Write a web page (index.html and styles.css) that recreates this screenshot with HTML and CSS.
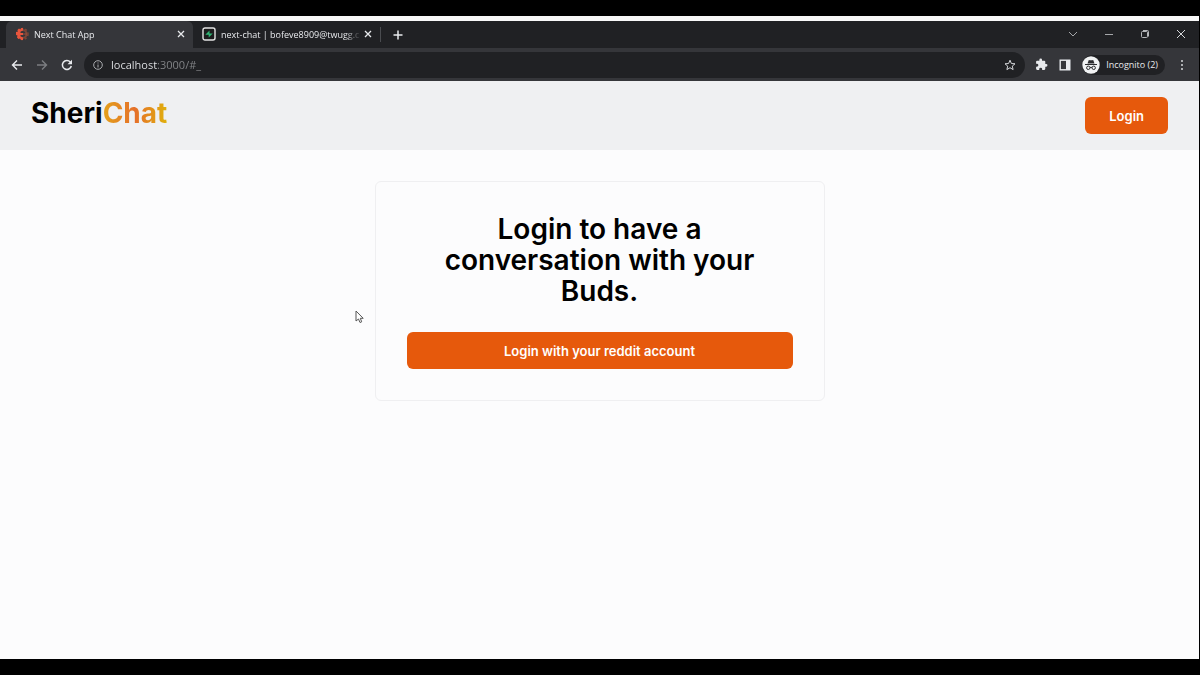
FILE: index.html
```html
<!DOCTYPE html>
<html lang="en">

<head>
    <meta charset="UTF-8">
    <meta name="viewport" content="width=device-width, initial-scale=1.0">
    <link rel="stylesheet" href="styles.css">
    <title>Next Chat App</title>
</head>

<body>
    <div class="window">
        <!-- tab strip -->
        <div class="tabs">
            <div class="tab tab-active">
                <svg class="icon" width="14" height="14" viewBox="0 0 14 14">
                    <circle cx="7.500" cy="7" r="4" fill="none" stroke="#7d4638" stroke-width="2" />
                    <circle cx="7.500" cy="7" r="5.500" fill="none" stroke="#7d4638" stroke-width="1.500" stroke-dasharray="2 2" />
                    <path d="M8 1H6L5.500 2.500L4 1.500L2.500 3L3 4.500L1 5V8L2.500 8.500L2 10.500L3.500 12L5 11.500L6 13H8V10.500L5.500 9.500V8H8V6H5.500V4.500L8 3.500Z" fill="#e8553d" />
                    <path d="M8 7H12" stroke="#a04c3a" />
                </svg>
                <button class="tab-title">Next Chat App</button>
                <button class="tab-close" aria-label="Close tab">
                    <svg width="8" height="8" viewBox="0 0 8 8"><path d="M1 1L7 7M7 1L1 7" stroke="#e8eaed" stroke-width="1.300" /></svg>
                </button>
            </div>
            <div class="tab">
                <svg class="icon" width="14" height="14" viewBox="0 0 14 14">
                    <rect x="1" y="1" width="12" height="12" rx="2" fill="#1c1c1c" stroke="#e4e4e4" stroke-width="1.400" />
                    <path d="M7.500 3.500V6.500H10.700L6.700 10.500V7.800H3.300Z" fill="#2fb574" />
                </svg>
                <button class="tab-title">next-chat | bofeve8909@twugg.c</button>
                <button class="tab-close" aria-label="Close tab">
                    <svg width="8" height="8" viewBox="0 0 8 8"><path d="M1 1L7 7M7 1L1 7" stroke="#e8eaed" stroke-width="1.300" /></svg>
                </button>
            </div>
            <button class="tab-new" aria-label="New tab">
                <svg width="10" height="10" viewBox="0 0 10 10"><path d="M5 0.500V9.500M0.500 5H9.500" stroke="#e8eaed" stroke-width="1.500" /></svg>
            </button>
            <div class="controls">
                <button aria-label="Search tabs">
                    <svg width="10" height="10" viewBox="0 0 10 10"><path d="M1 3L5 7L9 3" fill="none" stroke="#a5a7aa" /></svg>
                </button>
                <button aria-label="Minimize">
                    <svg width="10" height="10" viewBox="0 0 10 10"><path d="M1 5.500H9" stroke="#a5a7aa" /></svg>
                </button>
                <button aria-label="Restore">
                    <svg width="10" height="10" viewBox="0 0 10 10" fill="none" stroke="#b5b7ba">
                        <rect x="1.500" y="2.500" width="6" height="6" rx="1" />
                        <path d="M3 1.500H7.500Q8.500 1.500 8.500 2.500V7.500" />
                    </svg>
                </button>
                <button aria-label="Close">
                    <svg width="10" height="10" viewBox="0 0 10 10"><path d="M1 1L9 9M9 1L1 9" stroke="#d5d7da" /></svg>
                </button>
            </div>
        </div>

        <!-- toolbar -->
        <div class="toolbar">
            <button aria-label="Back">
                <svg width="12" height="12" viewBox="0 0 12 12"><path d="M11 6H2M6 1.500L1.500 6L6 10.500" fill="none" stroke="#e8eaed" stroke-width="1.400" /></svg>
            </button>
            <button aria-label="Forward">
                <svg width="12" height="12" viewBox="0 0 12 12"><path d="M1 6H10M6 1.500L10.500 6L6 10.500" fill="none" stroke="#7c7e81" stroke-width="1.400" /></svg>
            </button>
            <button aria-label="Reload">
                <svg width="12" height="12" viewBox="0 0 12 12">
                    <path d="M10.300 7A4.500 4.500 0 1 1 9.300 3" fill="none" stroke="#e8eaed" stroke-width="1.500" />
                    <path d="M11 0.800V5.300H6.500Z" fill="#e8eaed" />
                </svg>
            </button>
            <div class="address">
                <svg class="icon" width="10" height="10" viewBox="0 0 10 10">
                    <circle cx="5" cy="5" r="4.300" fill="none" stroke="#a9abae" />
                    <path d="M5 4.500V7.500M5 2.500V3.500" stroke="#a9abae" />
                </svg>
                <input class="address-input" type="text" aria-label="Address" value="localhost:3000/#_">
                <button aria-label="Bookmark">
                    <svg width="12" height="12" viewBox="0 0 12 12"><path d="M6 1.200L7.400 4.500L11 4.800L8.300 7.100L9.100 10.600L6 8.700L2.900 10.600L3.700 7.100L1 4.800L4.600 4.500Z" fill="none" stroke="#d5d7da" /></svg>
                </button>
            </div>
            <div class="actions">
                <button aria-label="Extensions">
                    <svg width="13" height="13" viewBox="0 0 24 24"><path fill="#e8eaed" d="M20.500 11H19V7a2 2 0 0 0-2-2h-4V3.500a2.500 2.500 0 0 0-5 0V5H4a2 2 0 0 0-2 2v3.800h1.500a2.700 2.700 0 0 1 0 5.400H2V20a2 2 0 0 0 2 2h3.800v-1.500a2.700 2.700 0 0 1 5.400 0V22H17a2 2 0 0 0 2-2v-4h1.500a2.500 2.500 0 0 0 0-5z" /></svg>
                </button>
                <button aria-label="Side panel">
                    <svg width="12" height="12" viewBox="0 0 12 12">
                        <rect x="1.200" y="1.200" width="9.600" height="9.600" fill="none" stroke="#e8eaed" stroke-width="1.400" />
                        <rect x="7" y="1" width="4" height="10" fill="#e8eaed" />
                    </svg>
                </button>
                <button class="profile">
                    <svg width="18" height="18" viewBox="0 0 18 18">
                        <circle cx="9" cy="9" r="8.700" fill="#f1f3f4" />
                        <path d="M5.500 7.500L6.800 4Q9 4.600 11.200 4L12.500 7.500Z" fill="#2b2c2f" />
                        <path d="M3 8.500H15" stroke="#2b2c2f" />
                        <g fill="none" stroke="#2b2c2f">
                            <circle cx="6.300" cy="11.800" r="1.700" />
                            <circle cx="11.700" cy="11.800" r="1.700" />
                            <path d="M8 11.500Q9 11 10 11.500" />
                        </g>
                    </svg>
                    Incognito (2)
                </button>
                <button aria-label="Menu">
                    <svg width="12" height="12" viewBox="0 0 12 12" fill="#d5d7da">
                        <circle cx="6" cy="2" r="1" />
                        <circle cx="6" cy="6" r="1" />
                        <circle cx="6" cy="10" r="1" />
                    </svg>
                </button>
            </div>
        </div>

        <div class="page">
            <header class="header">
                <h1 class="logo">Sheri<span class="logo-color">Chat</span></h1>
                <button class="btn">Login</button>
            </header>
            <main class="card">
                <h2 class="card-title">Login to have a conversation with your Buds.</h2>
                <button class="btn">Login with your reddit account</button>
            </main>
        </div>
    </div>

    <svg class="cursor" width="10" height="14" viewBox="0 0 10 14">
        <path d="M1 1V11L3.500 9L5 12.500L6.700 11.800L5.300 8.300H8.200Z" fill="#fff" stroke="#555" />
    </svg>
</body>

</html>
```
FILE: styles.css
```css
* {
    box-sizing: border-box;
}

body {
    margin: 0;
    background-color: #000;
    font-family: "Inter", sans-serif;
}

button {
    border: 0;
    padding: 0;
    background: none;
    font-family: inherit;
    cursor: pointer;
}

svg {
    display: block;
}

.icon {
    flex: none;
}

.window {
    display: flex;
    flex-direction: column;
    height: 100vh;
    padding: 16px 1px 16px 0;
    font-family: "Open Sans", sans-serif;
}

/* browser tabs */
.tabs {
    display: flex;
    align-items: stretch;
    height: 32px;
    border-top: 5px solid #f8f8f8;
    padding-left: 6px;
    background-color: #202124;
}

.tab {
    display: flex;
    align-items: center;
    width: 187px;
    padding: 0 7px 1px 9px;
    border-radius: 6px 6px 0 0;
}

.tab-active {
    background-color: #35363a;
}

.tab-title {
    flex: 1;
    overflow: hidden;
    margin: 0 2px 0 5px;
    color: #e8eaed;
    font-size: 9px;
    font-weight: 500;
    text-align: left;
    white-space: nowrap;
    -webkit-mask-image: linear-gradient(to right, #000 88%, transparent);
    mask-image: linear-gradient(to right, #000 88%, transparent);
}

.tab-close {
    padding: 1px;
}

.tab-new {
    margin: 6px 0;
    padding: 0 12px;
    border-left: 1px solid #4a4c50;
}

.controls {
    display: flex;
    align-items: center;
    gap: 26px;
    margin-left: auto;
    padding: 0 13px 2px 0;
}

/* browser toolbar */
.toolbar {
    display: flex;
    align-items: center;
    gap: 13px;
    height: 33px;
    padding: 0 11px;
    background-color: #35363a;
}

.address {
    display: flex;
    flex: 1;
    align-items: center;
    gap: 8px;
    height: 26px;
    margin: 0 -3px 0 -2px;
    padding: 0 9px;
    border-radius: 13px;
    background-color: #202124;
}

/* host is bright, port and path are dimmed */
.address-input {
    flex: 1;
    min-width: 0;
    border: 0;
    padding: 0;
    outline: 0;
    background: linear-gradient(to right, #e8eaed 46px, #85878a 46px);
    -webkit-background-clip: text;
    background-clip: text;
    color: transparent;
    font-family: inherit;
    font-size: 11px;
}

.actions {
    display: flex;
    align-items: center;
    gap: 11px;
}

.profile {
    display: flex;
    align-items: center;
    gap: 6px;
    height: 20px;
    padding-right: 7px;
    border-radius: 10px;
    background-color: #202124;
    color: #e8eaed;
    font-size: 9px;
    font-weight: 500;
}

/* chat app */
.page {
    flex: 1;
    background-color: #fcfcfd;
    font-family: "Inter", sans-serif;
}

.header {
    display: flex;
    justify-content: space-between;
    align-items: flex-start;
    padding: 16px 31px;
    background-color: #eff0f2;
}

.logo {
    margin: 0;
    font-size: 28px;
    font-weight: 700;
    line-height: 32px;
}

.logo-color {
    background: linear-gradient(to right, #e3a11b, #e5702a 50%, #e0b00c);
    -webkit-background-clip: text;
    background-clip: text;
    color: transparent;
}

.btn {
    height: 37px;
    padding: 0 24px;
    border-radius: 6px;
    background-color: #e6590c;
    color: #fff;
    font-size: 13px;
    font-weight: 600;
}

.btn:hover {
    background-color: #c94c08;
}

.card {
    display: flex;
    flex-direction: column;
    gap: 25px;
    max-width: 450px;
    margin: 31px auto;
    padding: 32px 31px 31px;
    border: 1px solid #efeff1;
    border-radius: 6px;
}

.card-title {
    margin: 0;
    font-size: 28px;
    font-weight: 600;
    line-height: 31px;
    text-align: center;
}

.cursor {
    position: absolute;
    top: 310px;
    left: 355px;
}
```
